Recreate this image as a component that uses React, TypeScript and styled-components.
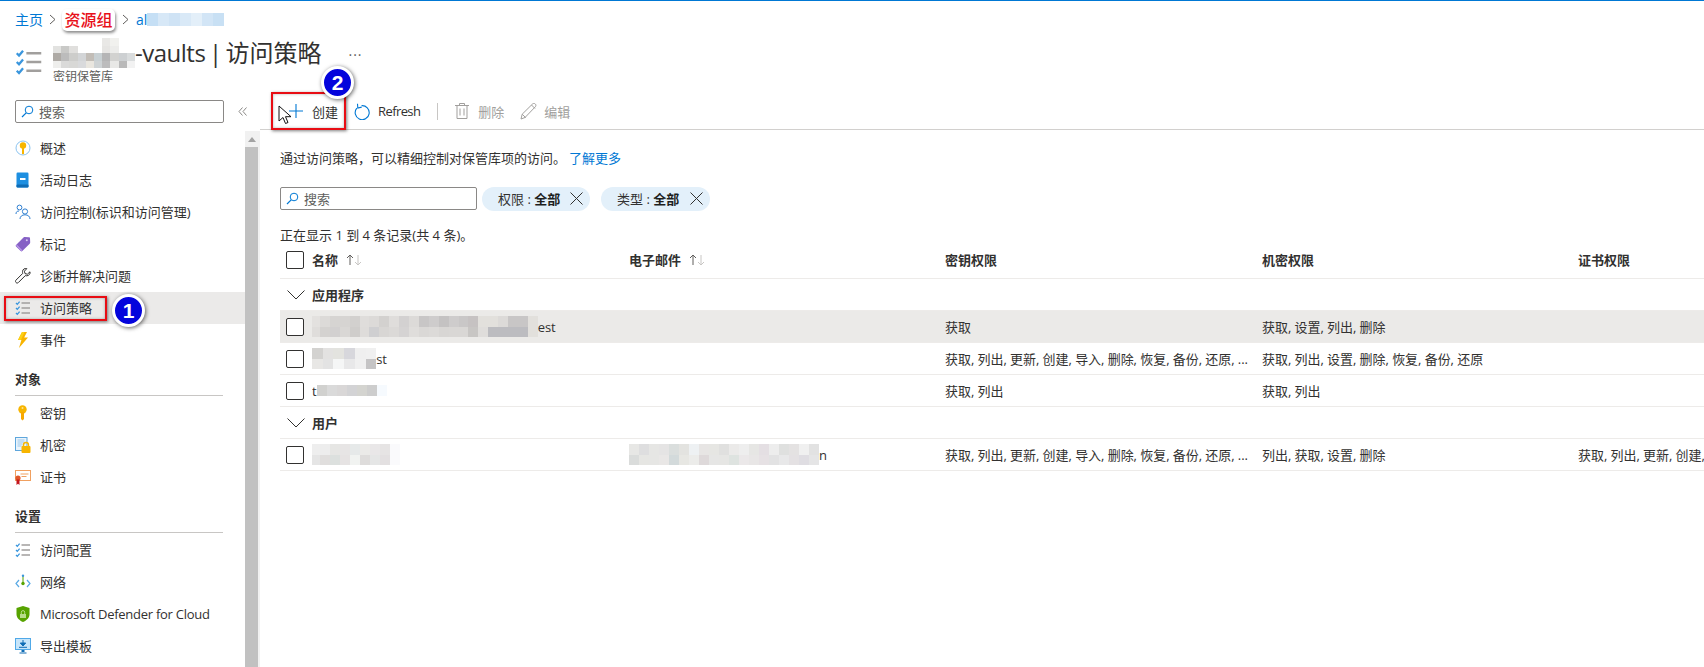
import React from "react";
import styled, { createGlobalStyle } from "styled-components";

const FONT = `"Open Sans", "Noto Sans CJK SC", sans-serif`;

const Global = createGlobalStyle`
  html, body { margin: 0; padding: 0; background: #fff; overflow: hidden; }
  body { font-family: ${FONT}; font-size: 13px; color: #323130; }
  * { box-sizing: border-box; }
`;

const Page = styled.div`
  position: relative;
  width: 1704px;
  height: 667px;
  overflow: hidden;
  border-top: 1px solid #0078d4;
  display: flex;
  flex-direction: column;
`;

/* ---------- header ---------- */
const Crumbs = styled.nav`
  height: 37px;
  padding: 0 0 0 15px;
  display: flex;
  align-items: center;
  font-size: 14px;
  color: #0078d4;
`;
const CrumbLink = styled.span`
  color: #0078d4;
  line-height: 20px;
`;
const CrumbSep = styled.span`
  display: inline-flex;
  width: ${(p: { $w: number }) => p.$w}px;
  justify-content: center;
  color: #605e5c;
`;
const RedLabel = styled.span`
  display: inline-block;
  width: 53px;
  height: 22px;
  line-height: 22px;
  text-align: center;
  font-size: 16px;
  font-weight: 500;
  color: #e8101a;
  background: #fff;
  border-radius: 5px;
  box-shadow: 1px 2px 3px rgba(0, 0, 0, 0.45);
`;
const TitleBar = styled.header`
  height: 54px;
  display: flex;
  padding-left: 15px;
`;
const TitleIcon = styled.div`
  width: 38px;
  padding-top: 10px;
`;
const TitleText = styled.div`
  display: flex;
  flex-direction: column;
`;
const TitleLine = styled.h1`
  margin: 0;
  height: 30px;
  display: flex;
  align-items: center;
  font-size: 24px;
  line-height: 30px;
  font-weight: 400;
  color: #323130;
  white-space: pre;
`;
const TitleLatin = styled.span`
  letter-spacing: -0.5px;
  word-spacing: -2px;
`;
const TitleMore = styled.span`
  margin-left: 27px;
  font-size: 14px;
  color: #605e5c;
  letter-spacing: 1px;
  position: relative;
  top: -2px;
`;
const Subtitle = styled.div`
  font-size: 12px;
  line-height: 16px;
  margin-top: 1px;
  color: #605e5c;
`;
const Latin = styled.span<{ $ls: number }>`
  letter-spacing: ${(p) => p.$ls}px;
`;

/* ---------- layout ---------- */
const Main = styled.div`
  flex: 1;
  display: flex;
  min-height: 0;
`;
const Sidebar = styled.aside`
  width: 260px;
  flex: none;
  display: flex;
  flex-direction: column;
  min-height: 0;
`;
const SideTop = styled.div`
  height: 39px;
  padding: 8px 0 0 15px;
  display: flex;
  align-items: flex-start;
`;
const SearchBox = styled.div<{ $w: number }>`
  width: ${(p) => p.$w}px;
  height: 23px;
  border: 1px solid #8a8886;
  border-radius: 2px;
  display: flex;
  align-items: center;
  padding-left: 5px;
  gap: 5px;
  font-size: 13px;
  color: #605e5c;
  flex: none;
`;
const Collapse = styled.span`
  margin-left: 14px;
  width: 10px;
  height: 23px;
  display: flex;
  align-items: center;
  justify-content: center;
`;
const SideBody = styled.div`
  flex: 1;
  display: flex;
  min-height: 0;
`;
const Nav = styled.div`
  width: 245px;
  flex: none;
  padding-top: 1px;
`;
const NavItem = styled.div<{ $active?: boolean }>`
  height: 32px;
  display: flex;
  align-items: center;
  gap: 9px;
  padding: 0 0 1px 15px;
  font-size: 13px;
  white-space: nowrap;
  background: ${(p) => (p.$active ? "#ebeae9" : "transparent")};
`;
const NavIcon = styled.span`
  width: 16px;
  height: 16px;
  flex: none;
  display: flex;
`;
const NavHead = styled.div`
  height: 40px;
  margin: 0 22px 1px 15px;
  display: flex;
  align-items: flex-end;
  padding-bottom: 6px;
  line-height: 20px;
  font-weight: 600;
  font-size: 13px;
  border-bottom: 1px solid #c8c6c4;
`;
const Scrollbar = styled.div`
  width: 15px;
  flex: none;
  background: #f1f1f1;
  display: flex;
  flex-direction: column;
  padding-right: 2px;
`;
const ScrollArrow = styled.div`
  height: 16px;
  display: flex;
  align-items: center;
  justify-content: center;
`;
const ScrollThumb = styled.div`
  flex: 1;
  background: #c1c1c1;
`;

const Content = styled.main`
  flex: 1;
  min-width: 0;
  display: flex;
  flex-direction: column;
`;
const Toolbar = styled.div`
  height: 38px;
  flex: none;
  display: flex;
  align-items: center;
  padding: 1px 0 0 29px;
  border-bottom: 1px solid #d2d0ce;
`;
const ToolButton = styled.span<{ $disabled?: boolean; $ml?: number; $gap?: number }>`
  display: inline-flex;
  align-items: center;
  gap: ${(p) => p.$gap ?? 8}px;
  margin-left: ${(p) => p.$ml ?? 0}px;
  font-size: 13px;
  color: ${(p) => (p.$disabled ? "#a19f9d" : "#323130")};
`;
const ToolSep = styled.span`
  width: 1px;
  height: 17px;
  margin-left: 17px;
  background: #c8c6c4;
`;
const Body = styled.div`
  padding-left: 20px;
  display: flex;
  flex-direction: column;
`;
const Info = styled.p`
  margin: 18px 0 0;
  height: 20px;
  line-height: 20px;
  font-size: 13px;
`;
const InfoLink = styled.a`
  color: #0078d4;
  margin-left: 3px;
`;
const FilterRow = styled.div`
  margin-top: 18px;
  height: 25px;
  display: flex;
  align-items: center;
`;
const Pill = styled.span<{ $w: number; $ml: number }>`
  width: ${(p) => p.$w}px;
  margin-left: ${(p) => p.$ml}px;
  height: 24px;
  border-radius: 12px;
  background: #e3f0fa;
  display: flex;
  align-items: center;
  padding: 0 7px 0 16px;
  justify-content: space-between;
  font-size: 13px;
  white-space: nowrap;
`;
const PillStrong = styled.span`
  font-weight: 600;
  color: #201f1e;
`;
const Count = styled.div`
  margin-top: 14px;
  height: 20px;
  line-height: 20px;
  font-size: 13px;
`;

const Row = styled.div<{ $selected?: boolean }>`
  height: 32px;
  width: 1424px;
  display: grid;
  grid-template-columns: 32px 317px 316px 317px 316px 126px;
  align-items: center;
  border-bottom: 1px solid #edebe9;
  background: ${(p) => (p.$selected ? "#ebeae8" : "transparent")};
`;
const HeaderRow = styled(Row)`
  height: 34px;
  padding-bottom: 4px;
`;
const GroupRow = styled.div`
  height: 32px;
  width: 1424px;
  display: flex;
  align-items: center;
  padding-left: 7px;
  gap: 7px;
  font-weight: 600;
  font-size: 13px;
  border-bottom: 1px solid #edebe9;
`;
const Check = styled.span`
  width: 18px;
  height: 18px;
  margin-left: 6px;
  border: 1px solid #323130;
  border-radius: 2px;
  background: #fff;
  display: block;
`;
const HeadCell = styled.div`
  font-weight: 600;
  font-size: 13px;
  display: flex;
  align-items: center;
  gap: 8px;
  white-space: nowrap;
`;
const Cell = styled.div`
  font-size: 13px;
  white-space: nowrap;
  overflow: hidden;
  padding-right: 8px;
  display: flex;
  align-items: center;
  letter-spacing: -0.05px;
`;
const CertCell = styled(Cell)`
  padding-right: 0;
`;
const Obscured = styled.svg<{ $ml?: number }>`
  flex: none;
  margin-left: ${(p) => p.$ml ?? 0}px;
  display: block;
`;

/* ---------- overlays ---------- */
const RedBox = styled.div`
  position: absolute;
  border: 2px solid #e80d14;
  box-shadow: 1px 1px 3px rgba(0, 0, 0, 0.5), inset 0 0 3px rgba(0, 0, 0, 0.3);
`;
const Badge = styled.div`
  position: absolute;
  width: 33px;
  height: 33px;
  border-radius: 50%;
  background: #0404dc;
  border: 3px solid #fff;
  box-shadow: 1px 1px 4px rgba(0, 0, 0, 0.6);
  color: #fff;
  font-family: "Liberation Sans", sans-serif;
  font-weight: 700;
  font-size: 21px;
  line-height: 27px;
  text-align: center;
`;
const Cursor = styled.svg`
  position: absolute;
  left: 278px;
  top: 104px;
`;

/* ---------- mosaics (censored, pixelated areas of the picture) ---------- */
function Mosaic({ rows, cw, ch, ml }: { rows: string[]; cw: number; ch: number; ml?: number }) {
  const grid = rows.map((r) => r.split(" "));
  const width = Math.max(...grid.map((r) => r.length)) * cw;
  return (
    <Obscured $ml={ml} width={width} height={grid.length * ch} shapeRendering="crispEdges">
      {grid.map((r, y) =>
        r.map((c, x) =>
          c === "-" ? null : <rect key={`${x}-${y}`} x={x * cw} y={y * ch} width={cw} height={ch} fill={`#${c}`} />
        )
      )}
    </Obscured>
  );
}

/* ---------- icons ---------- */
const ListChecks = ({ size = 16 }: { size?: number }) => (
  <svg width={size} height={size} viewBox="0 0 16 16" fill="none">
    <path d="M1 3l1.3 1.3L4.6 1.6M1 8l1.3 1.3L4.6 6.6M1 13l1.3 1.3 2.3-2.7" stroke="#3a96dd" strokeWidth="1.3" />
    <path d="M6.5 3H15M6.5 8H15M6.5 13H15" stroke="#a19f9d" strokeWidth="1.5" />
  </svg>
);
const Glass = () => (
  <svg width="13" height="13" viewBox="0 0 13 13" fill="none">
    <circle cx="8" cy="5" r="3.8" stroke="#0078d4" strokeWidth="1" />
    <path d="M5.2 7.8L1 12" stroke="#0078d4" strokeWidth="1.2" />
  </svg>
);
const KeyCircle = () => (
  <svg width="16" height="16" viewBox="0 0 16 16" fill="none">
    <circle cx="8" cy="8" r="7" stroke="#8cc4f0" strokeWidth="1" fill="#fff" />
    <circle cx="8" cy="5.5" r="3.2" fill="#f7b500" />
    <path d="M7 7h2v6.5l-1 1-1-1z" fill="#f7b500" />
  </svg>
);
const Book = () => (
  <svg width="16" height="16" viewBox="0 0 16 16">
    <rect x="1.5" y="0.5" width="12" height="15" rx="1.2" fill="#1d8fe1" />
    <rect x="1.5" y="12.5" width="12" height="3" rx="1" fill="#0f6cb5" />
    <rect x="5" y="6" width="5.5" height="2" fill="#fff" />
  </svg>
);
const People = () => (
  <svg width="16" height="16" viewBox="0 0 16 16" fill="none" stroke="#2f7fd1" strokeWidth="1">
    <circle cx="4.5" cy="3.5" r="2.4" />
    <circle cx="10" cy="7.5" r="2.6" />
    <path d="M1 10c0-2 1-3 3-3M5 15c0-2.5 2-4.2 5-4.2s5 1.7 5 4.2" />
  </svg>
);
const Tag = () => (
  <svg width="16" height="16" viewBox="0 0 16 16">
    <path d="M1 9l7.5-7.5c.4-.4 1-.5 1.5-.4l4 .2c.6 0 1 .5 1 1l.2 4c0 .6-.1 1-.5 1.4L7.3 15c-.5.5-1.1.5-1.6 0L1 10.6c-.5-.5-.5-1.1 0-1.6z" fill="#8661c5" />
    <path d="M1 9.8l5.4 5.4 1-1-5.4-5.4z" fill="#b796e8" />
    <circle cx="11.8" cy="4.2" r="1" fill="#d8c7f0" />
  </svg>
);
const Wrench = () => (
  <svg width="16" height="16" viewBox="0 0 16 16" fill="none" stroke="#323130" strokeWidth="1" strokeLinejoin="round">
    <path d="M15 3.8l-2.6 2.4-2.4-.6-.6-2.4L11.8.6C9.7 0 7.6 1.3 7.5 3.6c0 .7.1 1.2.3 1.7L1 12.1c-.7.7-.7 1.7 0 2.4s1.7.7 2.4 0l6.9-6.9c.5.2 1 .3 1.6.2 2.2-.2 3.6-2 3.1-4z" />
  </svg>
);
const Bolt = () => (
  <svg width="16" height="16" viewBox="0 0 16 16">
    <path d="M7 0h5L9.2 5.5H13L4 16l2.4-8H3z" fill="#f8b400" />
    <path d="M7 0h2.5L6 8H3z" fill="#fcd116" />
  </svg>
);
const KeyIcon = () => (
  <svg width="16" height="16" viewBox="0 0 16 16">
    <circle cx="7.5" cy="4.5" r="4.2" fill="#f7b500" />
    <path d="M6 7h3v7l-1.5 1.6L6 14z" fill="#f7a800" />
    <circle cx="7.5" cy="3" r="1" fill="#ffe38a" />
  </svg>
);
const Secret = () => (
  <svg width="16" height="16" viewBox="0 0 16 16">
    <rect x="0.5" y="0.5" width="11.5" height="13" fill="#eaf4fc" stroke="#5ea6dc" />
    <path d="M2.5 3h7M2.5 5h7M2.5 7h5M2.5 9h4" stroke="#9cc8ea" />
    <rect x="6.5" y="9" width="9" height="7" rx="1" fill="#f7b500" />
    <path d="M8.5 9.5V8a2.5 2.5 0 015 0v1.5" fill="none" stroke="#f7b500" strokeWidth="1.4" />
  </svg>
);
const Cert = () => (
  <svg width="16" height="16" viewBox="0 0 16 16">
    <rect x="0.5" y="1.5" width="15" height="10" fill="#fff" stroke="#f0a060" />
    <path d="M5.5 5h8M6.5 7.5h5" stroke="#f0a060" />
    <circle cx="3" cy="9" r="2.6" fill="#e0572a" />
    <path d="M1.5 10.5h3V16L3 14.8 1.5 16z" fill="#c4151c" />
  </svg>
);
const Network = () => (
  <svg width="16" height="16" viewBox="0 0 16 16" fill="none">
    <path d="M4 6L1 9.5 4 13M12 6l3 3.500L12 13" stroke="#59a9e4" strokeWidth="1.2" />
    <path d="M8 1.500V9" stroke="#57a300" strokeWidth="1" />
    <circle cx="8" cy="1.700" r="1.200" fill="#3a96dd" />
    <circle cx="8" cy="9.500" r="1.700" fill="#57a300" />
  </svg>
);
const Shield = () => (
  <svg width="16" height="16" viewBox="0 0 16 16">
    <path d="M8 0l6.500 2v6c0 4-3 6.500-6.500 8-3.500-1.500-6.500-4-6.500-8V2z" fill="#57a300" />
    <path d="M5 8h6v4H5z" fill="#b8dc8c" />
    <path d="M6.300 8V6.300a1.700 1.700 0 013.400 0V8" fill="none" stroke="#b8dc8c" />
  </svg>
);
const Monitor = () => (
  <svg width="16" height="16" viewBox="0 0 16 16">
    <rect x="0.500" y="0.500" width="15" height="11" fill="#c7e5fa" stroke="#50a9e8" />
    <path d="M8 2v5M5.300 5L8 8l2.700-3z" stroke="#0f6cb5" fill="#0f6cb5" />
    <path d="M4 9.300h8" stroke="#0f6cb5" />
    <path d="M6.500 12h3v2h-3zM4.500 14.500h7v1h-7z" fill="#0f6cb5" />
  </svg>
);
const Chevron = ({ color = "#605e5c" }: { color?: string }) => (
  <svg width="7" height="11" viewBox="0 0 7 11" fill="none">
    <path d="M1 1l5 4.500-5 4.500" stroke={color} strokeWidth="1" />
  </svg>
);
const DoubleLeft = () => (
  <svg width="10" height="9" viewBox="0 0 10 9" fill="none">
    <path d="M4.500.500L1 4.500l3.500 4M8.500.500L5 4.500l3.500 4" stroke="#8a8886" strokeWidth="1" />
  </svg>
);
const PlusIcon = () => (
  <svg width="14" height="14" viewBox="0 0 14 14">
    <path d="M7 0v14M0 7h14" stroke="#0078d4" strokeWidth="1.100" />
  </svg>
);
const RefreshIcon = () => (
  <svg width="16" height="17" viewBox="0 0 16 17" fill="none">
    <path d="M10.500 3.200a7 7 0 11-5.300 0" stroke="#0078d4" strokeWidth="1.100" transform="rotate(-28 8 9)" />
    <path d="M3.500 0.800l.3 4.200 3.900-.9" stroke="#0078d4" strokeWidth="1.100" />
  </svg>
);
const Trash = () => (
  <svg width="14" height="16" viewBox="0 0 14 16" fill="none" stroke="#a19f9d">
    <path d="M0 2.500h14M4.500 2.500V.500h5v2M2 2.500v13h10v-13M5 5.500v7M9 5.500v7" />
  </svg>
);
const Pencil = () => (
  <svg width="17" height="17" viewBox="0 0 17 17" fill="none" stroke="#a19f9d">
    <path d="M1 16l1.200-4.800L12.500 1c.8-.8 2-.8 2.800 0s.8 2 0 2.800L5 14.500zM2.200 11.200L5.800 14.800M11.500 2l3.500 3.500" />
  </svg>
);
const Close = () => (
  <svg width="13" height="13" viewBox="0 0 13 13" stroke="#323130" strokeWidth="1">
    <path d="M.5.500l12 12M12.500.500l-12 12" />
  </svg>
);
const ChevronDown = () => (
  <svg width="18" height="10" viewBox="0 0 18 10" fill="none">
    <path d="M.5.500L9 9 17.500.500" stroke="#323130" />
  </svg>
);
const SortArrows = () => (
  <svg width="17" height="12" viewBox="0 0 17 12" fill="none">
    <path d="M4 11V1M1 4l3-3 3 3" stroke="#605e5c" />
    <path d="M12 1v10M9 8l3 3 3-3" stroke="#c8c6c4" />
  </svg>
);

const topItems: [React.ReactNode, string][] = [
  [<KeyCircle />, "概述"],
  [<Book />, "活动日志"],
  [<People />, "访问控制(标识和访问管理)"],
  [<Tag />, "标记"],
  [<Wrench />, "诊断并解决问题"],
];

const allKey = "获取, 列出, 更新, 创建, 导入, 删除, 恢复, 备份, 还原, ...";

const titleMosaic = [
  "- - - - - - e9e8e6 f1f1ee - -",
  "e2e2e0 c9c9c7 e0dfdd - - - e6e5e3 ececea - -",
  "aeaaa5 bcbcbc cdcdcb d3d5d7 c2bdb7 c8d0d3 b5b5b6 d2d2d0 cdd0d2 d9dcdd",
  "eeeeec dadad9 d8d8d6 d9dadc e9e6df ced3d5 bcbcbd e8e8e6 b9b9b9 f2f2f2",
];

export default function App() {
  return (
    <Page>
      <Global />
      <Crumbs>
        <CrumbLink>主页</CrumbLink>
        <CrumbSep $w={19}><Chevron /></CrumbSep>
        <RedLabel>资源组</RedLabel>
        <CrumbSep $w={21}><Chevron /></CrumbSep>
        <CrumbLink>al</CrumbLink>
        <Mosaic cw={11} ch={13} ml={0} rows={["c5dff5 d7e8f7 cfe3f5 d9e9f7 e3eff9 d2e5f6 c8e0f4"]} />
      </Crumbs>
      <TitleBar>
        <TitleIcon><ListChecks size={28} /></TitleIcon>
        <TitleText>
          <TitleLine>
            <Mosaic rows={titleMosaic} cw={8.2} ch={7.500} />
            <TitleLatin>-vaults | </TitleLatin>访问策略
            <TitleMore>...</TitleMore>
          </TitleLine>
          <Subtitle>密钥保管库</Subtitle>
        </TitleText>
      </TitleBar>
      <Main>
        <Sidebar>
          <SideTop>
            <SearchBox $w={209}><Glass />搜索</SearchBox>
            <Collapse><DoubleLeft /></Collapse>
          </SideTop>
          <SideBody>
            <Nav>
              {topItems.map(([icon, label]) => (
                <NavItem key={label}><NavIcon>{icon}</NavIcon>{label}</NavItem>
              ))}
              <NavItem $active><NavIcon><ListChecks /></NavIcon>访问策略</NavItem>
              <NavItem><NavIcon><Bolt /></NavIcon>事件</NavItem>
              <NavHead>对象</NavHead>
              <NavItem><NavIcon><KeyIcon /></NavIcon>密钥</NavItem>
              <NavItem><NavIcon><Secret /></NavIcon>机密</NavItem>
              <NavItem><NavIcon><Cert /></NavIcon>证书</NavItem>
              <NavHead>设置</NavHead>
              <NavItem><NavIcon><ListChecks /></NavIcon>访问配置</NavItem>
              <NavItem><NavIcon><Network /></NavIcon>网络</NavItem>
              <NavItem><NavIcon><Shield /></NavIcon><Latin $ls={-0.27}>Microsoft Defender for Cloud</Latin></NavItem>
              <NavItem><NavIcon><Monitor /></NavIcon>导出模板</NavItem>
            </Nav>
            <Scrollbar>
              <ScrollArrow>
                <svg width="8" height="5" viewBox="0 0 8 5"><path d="M4 0l4 5H0z" fill="#a3a3a3" /></svg>
              </ScrollArrow>
              <ScrollThumb />
            </Scrollbar>
          </SideBody>
        </Sidebar>
        <Content>
          <Toolbar>
            <ToolButton $gap={9}><PlusIcon />创建</ToolButton>
            <ToolButton $ml={16} $gap={8}><RefreshIcon /><Latin $ls={-0.6}>Refresh</Latin></ToolButton>
            <ToolSep />
            <ToolButton $disabled $ml={17} $gap={9}><Trash />删除</ToolButton>
            <ToolButton $disabled $ml={16} $gap={7}><Pencil />编辑</ToolButton>
          </Toolbar>
          <Body>
            <Info>通过访问策略，可以精细控制对保管库项的访问。<InfoLink>了解更多</InfoLink></Info>
            <FilterRow>
              <SearchBox $w={197}><Glass />搜索</SearchBox>
              <Pill $w={108} $ml={5}><span>权限 : <PillStrong>全部</PillStrong></span><Close /></Pill>
              <Pill $w={109} $ml={11}><span>类型 : <PillStrong>全部</PillStrong></span><Close /></Pill>
            </FilterRow>
            <Count>正在显示 1 到 4 条记录(共 4 条)。</Count>
            <HeaderRow>
              <Check />
              <HeadCell>名称<SortArrows /></HeadCell>
              <HeadCell>电子邮件<SortArrows /></HeadCell>
              <HeadCell>密钥权限</HeadCell>
              <HeadCell>机密权限</HeadCell>
              <HeadCell>证书权限</HeadCell>
            </HeaderRow>
            <GroupRow><ChevronDown />应用程序</GroupRow>
            <Row $selected>
              <Check />
              <Cell>
                <Mosaic ml={-2} cw={9.9} ch={10.500} rows={[
                  "e3e1df dcdad8 d6d4d2 d6d4d2 d2d0ce dfdddb dcdad8 d3d1cf dfdddb d3d1d1 dcdad8 c8c6c6 cecccc c4c2c2 cecccc c9c7c7 c6c2c2 e2e0dc e2e0dc dcdad8 c8c6c6 c8c6c6 e2e0dc",
                  "dfdddb d4d2d0 d2d0d0 d9d7d5 cfcdcb dedcda cfcfd1 d8d6d4 dbd9d7 d5d3d3 dfdddb dad8d6 dcdad8 d8d6d4 d9d7d5 d9d7d5 c8c6c4 dfdddb bcbcc0 bcbcc0 bcbcc0 bcbcc0 e2e0dc",
                ]} />
                est
              </Cell>
              <Cell />
              <Cell>获取</Cell>
              <Cell>获取, 设置, 列出, 删除</Cell>
              <Cell />
            </Row>
            <Row>
              <Check />
              <Cell>
                <Mosaic cw={10.7} ch={10.500} rows={[
                  "d3d2d0 e3e2e1 e3e3df d7d7dc efefef f0f0f0",
                  "e8e7e5 e3e3e3 f5f6f6 e8e8e9 f0f0f0 c5c4c5",
                ]} />
                st
              </Cell>
              <Cell />
              <Cell>{allKey}</Cell>
              <Cell>获取, 列出, 设置, 删除, 恢复, 备份, 还原</Cell>
              <Cell />
            </Row>
            <Row>
              <Check />
              <Cell>
                t
                <Mosaic ml={0} cw={10} ch={11} rows={["d1d1cf dadada d9d7d7 d3d3d5 d4d4d0 cdcdcd f6fafe"]} />
              </Cell>
              <Cell />
              <Cell>获取, 列出</Cell>
              <Cell>获取, 列出</Cell>
              <Cell />
            </Row>
            <GroupRow><ChevronDown />用户</GroupRow>
            <Row>
              <Check />
              <Cell>
                <Mosaic ml={-2} cw={10} ch={10.500} rows={[
                  "eeeeee ededed e6e6e4 e7e5e5 e6e9e9 ebeae8 e9e7e8 e6e4e4 fafafc",
                  "e5e5e5 e0dedd dce0de e6e3e3 f1f3f1 dedcdb e5e6e6 e3e0e1 fafafc",
                ]} />
              </Cell>
              <Cell>
                <Mosaic cw={10} ch={10.500} rows={[
                  "e7e7e5 dededf e6e6e4 e5e4e4 dadedd e3e3e0 eef1f3 e7e5e4 e6e6e3 e0e0df ebeae9 eeeeee e6e6e4 e4dfe3 ededed dfe0df e4e2e2 f0f0f0 e2e2e2",
                  "dadcdb e6e6e3 e6e6e4 e9e7e6 d3dadb e7e7e3 ececea ded9da e6e6e5 e6e6e4 dee3e0 ebe8e9 e8e6e6 e6e1e4 e2e2e3 e8e8e9 e4e1e3 dfdde2 e5e5e6",
                ]} />
                n
              </Cell>
              <Cell>{allKey}</Cell>
              <Cell>列出, 获取, 设置, 删除</Cell>
              <CertCell>获取, 列出, 更新, 创建, 导入, 删除, 恢复, 备份, 还原, ...</CertCell>
            </Row>
          </Body>
        </Content>
      </Main>

      <RedBox style={{ left: 4, top: 295, width: 103, height: 25 }} />
      <RedBox style={{ left: 271, top: 91, width: 75, height: 38 }} />
      <Badge style={{ left: 112, top: 293 }}>1</Badge>
      <Badge style={{ left: 321, top: 65 }}>2</Badge>
      <Cursor width="14" height="20" viewBox="0 0 14 20">
        <path d="M1 1v15l4-3.500 2.500 6 2.500-1-2.500-5.800H13z" fill="#fff" stroke="#111" strokeWidth="1" strokeLinejoin="round" />
      </Cursor>
    </Page>
  );
}
